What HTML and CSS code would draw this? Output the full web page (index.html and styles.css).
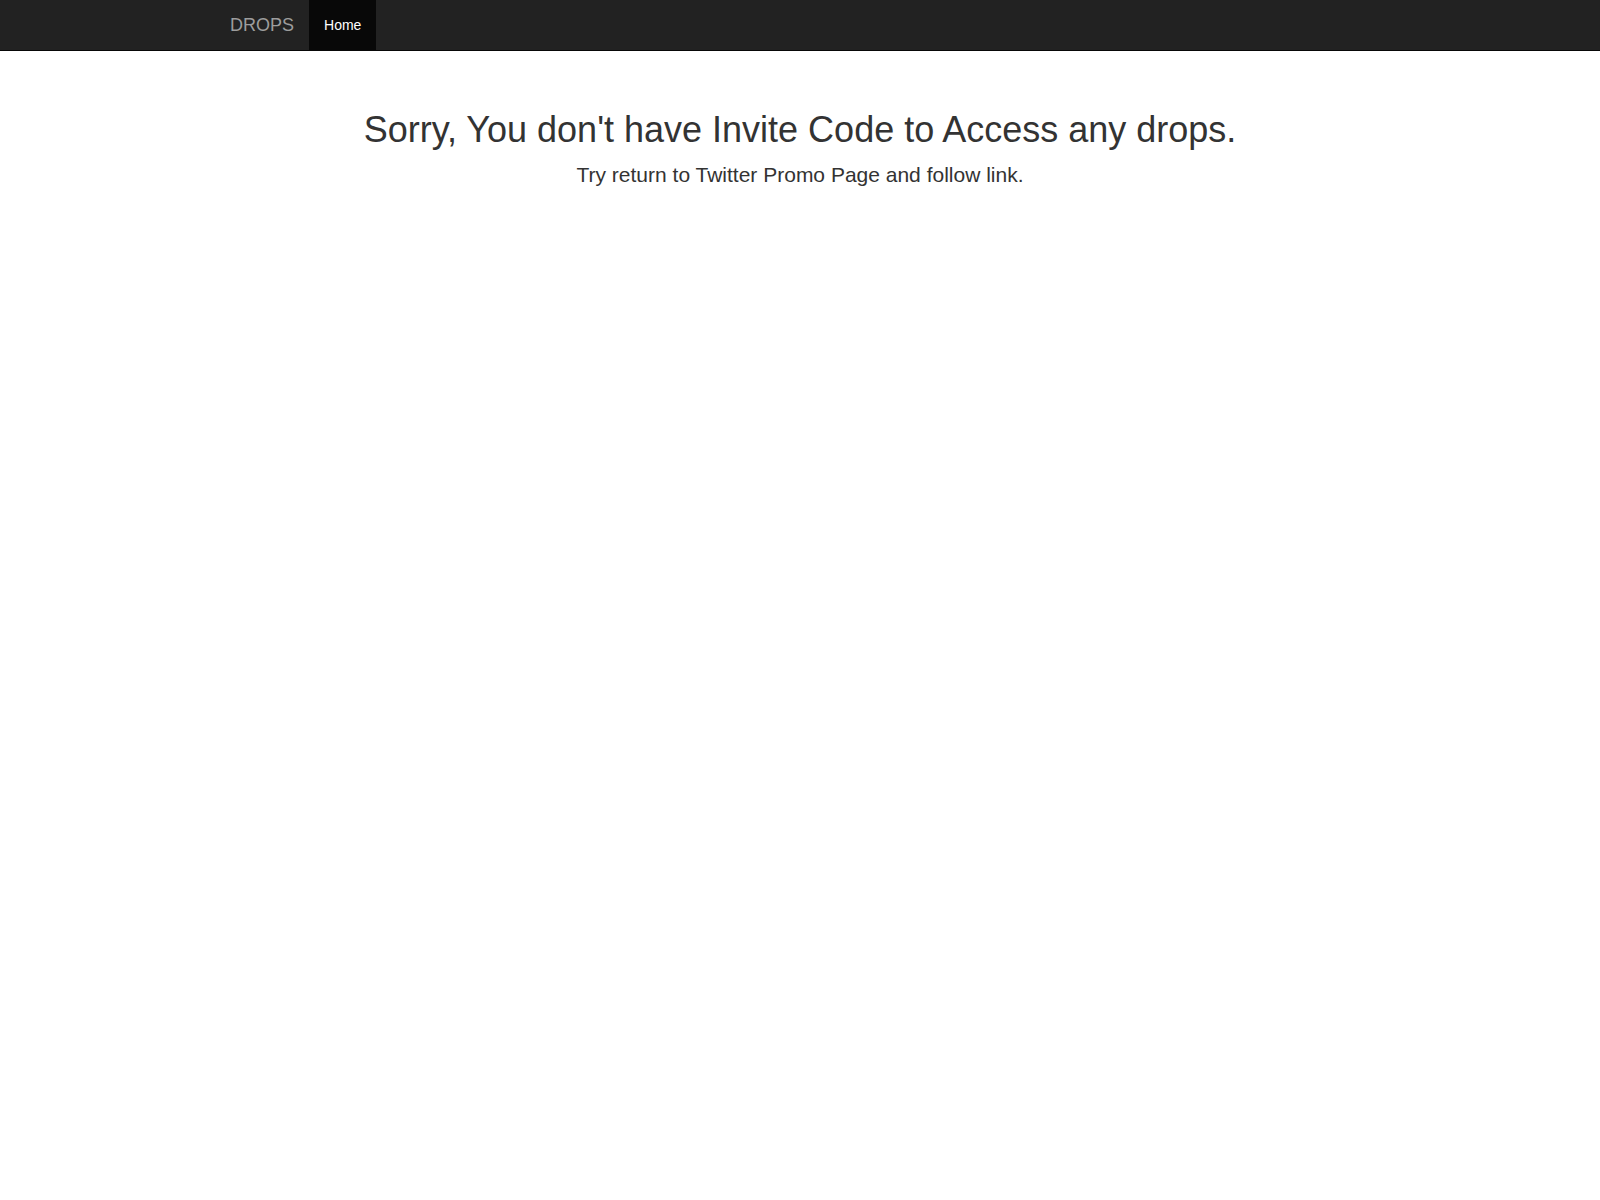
FILE: index.html
```html
<!DOCTYPE html>
<html lang="en">
<head>
<meta charset="utf-8">
<title>DROPS</title>
<link rel="stylesheet" href="styles.css">
</head>
<body>
<nav class="navbar">
  <div class="container nav-inner">
    <a class="brand" href="#">DROPS</a>
    <ul class="nav">
      <li class="active"><a href="#">Home</a></li>
    </ul>
  </div>
</nav>
<main class="container">
  <div class="starter">
    <h1 class="title">Sorry, You don't have Invite Code to Access any drops.</h1>
    <p class="lead">Try return to Twitter Promo Page and follow link.</p>
  </div>
</main>
</body>
</html>
```

FILE: styles.css
```css
* { box-sizing: border-box; }
html, body { margin: 0; padding: 0; }
body {
  font-family: "Liberation Sans", Arial, Helvetica, sans-serif;
  font-size: 14px;
  line-height: 1.42857143;
  color: #333;
  background: #fff;
}
.container {
  width: 1170px;
  margin: 0 auto;
  padding: 0 15px;
}
.navbar {
  height: 51px;
  background: #222;
  border-bottom: 1px solid #080808;
}
.nav-inner {
  display: flex;
  align-items: stretch;
  height: 50px;
}
.brand {
  margin-left: -15px;
  padding: 15px;
  height: 50px;
  font-size: 18px;
  line-height: 20px;
  color: #9d9d9d;
  text-decoration: none;
}
.nav {
  list-style: none;
  margin: 0;
  padding: 0;
  display: flex;
}
.nav a {
  display: block;
  padding: 15px;
  line-height: 20px;
  color: #9d9d9d;
  text-decoration: none;
}
.nav .active a {
  color: #fff;
  background: #080808;
  height: 50px;
}
.starter {
  padding: 39px 15px 40px;
  text-align: center;
}
.title {
  margin: 20px 0 10px;
  font-size: 36px;
  font-weight: 500;
  line-height: 1.1;
}
.lead {
  margin: 0 0 20px;
  font-size: 21px;
  font-weight: 300;
  line-height: 1.4;
}
```
